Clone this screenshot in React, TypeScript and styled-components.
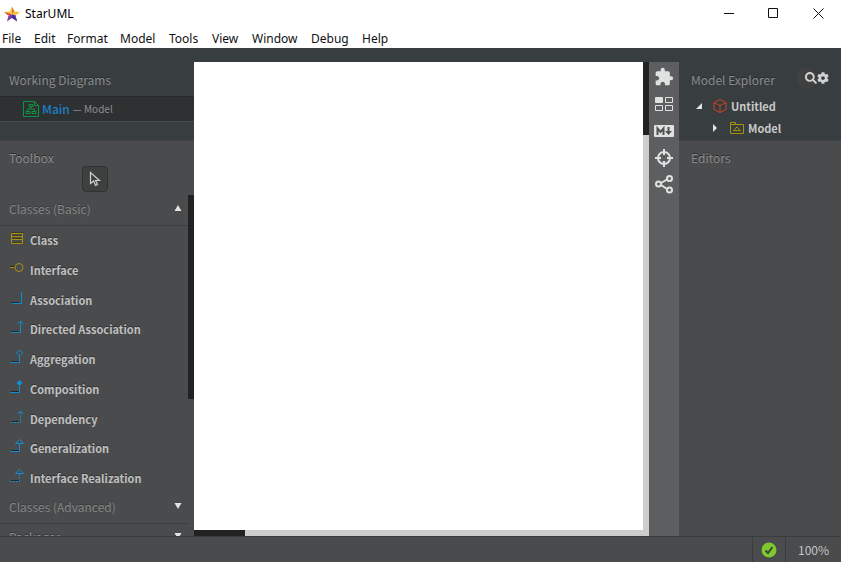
import React from "react";
import styled, { createGlobalStyle } from "styled-components";
import { FaCog, FaSearch } from "react-icons/fa";
import { MdExtension } from "react-icons/md";

const GlobalStyle = createGlobalStyle`
  * { box-sizing: border-box; }
  body { margin: 0; background: #4a4b4c; overflow: hidden; }
  button { border: 0; padding: 0; margin: 0; background: none; color: inherit; font: inherit; }
  h2, ul, p { margin: 0; padding: 0; list-style: none; }
  svg { display: block; flex: none; }
`;

const Window = styled.div`
  display: grid;
  grid-template-rows: 27px 21px minmax(0, 1fr) 26px;
  height: 100vh;
  font: 12px/20px "Noto Sans CJK SC", sans-serif;
  color: #c5c5c5;
`;

const TitleBar = styled.header`
  display: flex;
  align-items: center;
  background: #fff;
  color: #000;
  font: 12px/20px "Noto Sans", sans-serif;
  padding-left: 4px;
  gap: 5px;
`;

const WindowButtons = styled.div`
  display: flex;
  margin-left: auto;
`;

const WindowButton = styled.button`
  display: grid;
  place-items: center;
  width: 45px;
  height: 27px;
`;

const MenuBar = styled.nav`
  display: flex;
  align-items: flex-start;
  gap: 12px;
  padding: 3px 2px 0;
  background: #fff;
  color: #111;
  font: 12px/18px "Noto Sans", sans-serif;
`;

const MenuButton = styled.button<{ $width: number }>`
  width: ${(p) => p.$width}px;
  text-align: left;
  white-space: nowrap;
`;

const Body = styled.div`
  display: grid;
  grid-template-columns: 194px minmax(0, 1fr) 30px 162px;
  min-height: 0;
`;

const SidePanel = styled.aside`
  display: flex;
  flex-direction: column;
  min-height: 0;
  overflow: hidden;
  background: #4a4b4c;
`;

const TopSection = styled.section`
  flex: none;
  height: 93px;
  padding-top: 22px;
  background: #383d3f;
  border-bottom: 1px solid #414547;
`;

const SectionTitle = styled.h2<{ $inset?: number }>`
  padding-left: ${(p) => p.$inset ?? 9}px;
  font-size: 12px;
  font-weight: 400;
  line-height: 20px;
  color: #8b8d8d;
  text-shadow: 0 -1px 0 #292c2d;
`;

const DiagramItem = styled.button`
  display: flex;
  align-items: center;
  gap: 3px;
  width: 100%;
  height: 26px;
  margin-top: 6px;
  padding-left: 23px;
  background: #2d3132;
  border-top: 1px solid #25292a;
  border-bottom: 1px solid #444949;
  color: #8b8d8d;
  font-size: 10px;
`;

const DiagramName = styled.span`
  color: #1d7fc4;
  font-size: 12px;
  font-weight: 500;
`;

const Toolbox = styled.section`
  display: flex;
  flex-direction: column;
  flex: 1;
  min-height: 0;
  padding-top: 7px;
`;

const PointerButton = styled.button`
  display: grid;
  place-items: center;
  flex: none;
  align-self: center;
  width: 26px;
  height: 26px;
  margin: -2px 4px 3px 0;
  background: #3e4040;
  border: 1px solid #303232;
  border-radius: 4px;
`;

const ToolScroller = styled.div`
  display: grid;
  grid-template-columns: minmax(0, 1fr) 6px;
  flex: 1;
  min-height: 0;
  overflow: hidden;
`;

const ToolGroups = styled.div`
  min-height: 0;
  padding-top: 1px;
  overflow: hidden;
`;

const GroupHeader = styled.button`
  display: flex;
  align-items: center;
  justify-content: space-between;
  width: 100%;
  height: 30px;
  padding: 0 6px 4px 9px;
  border-bottom: 1px solid #3c3e3f;
  color: #858787;
  text-shadow: 0 -1px 0 #36393a;
`;

const ToolList = styled.ul``;

const ToolItem = styled.li`
  height: 30px;

  &:nth-child(4n + 3) {
    height: 29px;
  }
`;

const ToolButton = styled.button`
  display: flex;
  gap: 5px;
  width: 100%;
  padding: 4px 0 4px 9px;
  color: #c0c0c0;
  font-size: 11px;
  font-weight: 700;
  line-height: 20px;
  text-shadow: 0 -1px 0 #303233;
`;

const Thumb = styled.div<{ $length: number; $across?: boolean }>`
  width: ${(p) => (p.$across ? `${p.$length}px` : "6px")};
  height: ${(p) => (p.$across ? "6px" : `${p.$length}px`)};
  background: #222;
`;

const Editor = styled.main`
  display: grid;
  grid-template-columns: minmax(0, 1fr) 6px;
  grid-template-rows: minmax(0, 1fr) 6px;
  border-top: 14px solid #383d3f;
  background: #cdcdcd;
`;

const Canvas = styled.div`
  background: #fff;
`;

const ToolStrip = styled.nav`
  display: flex;
  flex-direction: column;
  align-items: center;
  gap: 7px;
  padding-top: 5px;
  border-top: 14px solid #383d3f;
  background: #5d5e60;
  color: #e0e2e2;
`;

const StripButton = styled.button`
  display: grid;
  place-items: center;
  width: 30px;
  height: 20px;
`;

const ExplorerHeader = styled.div`
  display: flex;
  align-items: center;
  height: 20px;
  padding-right: 12px;
`;

const ExplorerActions = styled.div`
  display: flex;
  align-items: center;
  margin-left: auto;
  color: #d0d1d1;
`;

const RoundButton = styled.button<{ $filled?: boolean }>`
  display: flex;
  align-items: center;
  justify-content: flex-end;
  width: ${(p) => (p.$filled ? 21 : 12)}px;
  height: 21px;
  margin-top: -4px;
  border-radius: 50%;
  background: ${(p) => (p.$filled ? "#404040" : "transparent")};
`;

const TreeRow = styled.button<{ $depth: number }>`
  display: flex;
  align-items: center;
  width: 100%;
  height: 22px;
  padding-left: ${(p) => 16 + p.$depth * 16}px;
  gap: ${(p) => (p.$depth ? 11 : 10)}px;
  color: #c8c8c8;
  font-size: 11px;
  font-weight: 700;
`;

const TreeLabel = styled.span`
  display: flex;
  align-items: center;
  gap: 4px;
`;

const Tree = styled.div`
  padding-top: 5px;
`;

const EditorsSection = styled.section`
  padding-top: 7px;
`;

const StatusBar = styled.footer`
  display: flex;
  justify-content: flex-end;
  background: #4a4b4c;
  border-top: 1px solid #3a3c3d;
  font-size: 12px;
`;

const StatusButton = styled.button<{ $width: number }>`
  display: flex;
  align-items: center;
  justify-content: center;
  width: ${(p) => p.$width}px;
  padding-top: 1px;
  border-left: 1px solid #3a3c3d;
`;

const BLUE = "#128bd0";
const GOLD = "#a8900c";

const toolArt: Record<string, React.ReactNode> = {
  Class: (
    <g stroke={GOLD} fill="none">
      <path d="M2.5 3.5h11v10h-11zM2 6.5h12M2 9.5h12" />
      <path d="M2 2.5h12M3 5.5h10M3 8.5h10M3 12.5h10" stroke="#343012" opacity=".6" />
    </g>
  ),
  Interface: (
    <g stroke={GOLD} fill="none">
      <path d="M1 6.5h5" stroke="#252829" />
      <path d="M1 7.5h5" />
      <circle cx="10" cy="7.5" r="4" />
    </g>
  ),
  Association: <path d="M3 13.5h9.5V2" />,
  "Directed Association": <path d="M2 13.5h9.5V2M8.5 5l3-3 3 3" />,
  Aggregation: <path d="M1 13.5h9.5V7M10.5 1l3 3-3 3-3-3z" />,
  Composition: (
    <>
      <path d="M1 13.5h9.5V7" />
      <path d="M10.5 1.5L13 4l-2.5 2.5L8 4z" fill={BLUE} />
    </>
  ),
  Dependency: (
    <>
      <path d="M2 13.5h9.5V2" strokeDasharray="2 1" />
      <path d="M8.5 5l3-3 3 3" />
    </>
  ),
  Generalization: <path d="M1 13.5h9.5V6M6.5 5.5l4-4 4 4z" />,
  "Interface Realization": (
    <>
      <path d="M1 13.5h9.5V6" strokeDasharray="2 1" />
      <path d="M6.5 5.5l4-4 4 4z" />
    </>
  ),
};

const isConnector = (name: string) => name !== "Class" && name !== "Interface";

function ToolIcon({ name }: { name: string }) {
  return (
    <svg width="16" height="20" viewBox="0 0 16 20" fill="none" stroke={BLUE} aria-hidden="true">
      {isConnector(name) && <path d="M2 12.5h8" stroke="#252829" />}
      {toolArt[name]}
    </svg>
  );
}

function Arrow({ up }: { up?: boolean }) {
  return (
    <svg width="8" height="12" viewBox="0 0 8 12" aria-hidden="true">
      <path d={up ? "M4 2l3.5 6h-7z" : "M.5 2h7L4 8z"} fill="#e2e2e2" />
    </svg>
  );
}

function StarLogo() {
  return (
    <svg width="16" height="16" viewBox="0 0 16 16" aria-hidden="true">
      <path d="M8 .5L5.5 5.5 8 8.500z" fill="#f9d338" />
      <path d="M8 .5L10.5 5.5 8 8.500z" fill="#e8742c" />
      <path d="M10.5 5.500l5.500.5-4.500 3.500L8 8.500z" fill="#f7c12f" />
      <path d="M11.5 9.500L13 15.500 8 12V8.500z" fill="#33288c" />
      <path d="M8 12L3 15.500l1.500-6L8 8.500z" fill="#7a3fa8" />
      <path d="M4.500 9.500L0 6l5.500-.5L8 8.500z" fill="#f6ba38" />
      <path d="M4.500 9.500L0 6l8 2.500z" fill="#e23d50" />
      <path d="M8 8.500l3.500 1L13 15.500z" fill="#5b3fa8" />
    </svg>
  );
}

const menus: [string, number][] = [
  ["File", 20], ["Edit", 21], ["Format", 41], ["Model", 37], ["Tools", 31],
  ["View", 28], ["Window", 47], ["Debug", 39], ["Help", 27],
];

const stripTools: { label: string; icon: React.ReactNode }[] = [
  { label: "Extensions", icon: <MdExtension size={20} /> },
  {
    label: "Thumbnails",
    icon: (
      <svg width="18" height="14" viewBox="0 0 18 14" fill="none" stroke="currentColor">
        <path d="M.5.5h7v5h-7z" fill="currentColor" />
        <path d="M10.5.5h7v5h-7zM.5 8.5h7v5h-7zM10.5 8.5h7v5h-7z" />
      </svg>
    ),
  },
  {
    label: "Markdown documentation",
    icon: (
      <svg width="20" height="12" viewBox="0 0 20 12">
        <rect width="20" height="12" rx="1" fill="currentColor" />
        <path d="M3.5 10V3.5L6.500 7l3-3.500V10" fill="none" stroke="#4f5152" strokeWidth="2" />
        <path d="M13.500 2h2v4h2.500l-3.500 4-3.500-4h2.500z" fill="#4f5152" />
      </svg>
    ),
  },
  {
    label: "Select in explorer",
    icon: (
      <svg width="18" height="18" viewBox="0 0 18 18" fill="none" stroke="currentColor" strokeWidth="2">
        <circle cx="9" cy="9" r="6" />
        <path d="M9 0v6M9 12v6M0 9h6M12 9h6" />
      </svg>
    ),
  },
  {
    label: "Relationships",
    icon: (
      <svg width="18" height="20" viewBox="0 0 18 20" fill="none" stroke="currentColor" strokeWidth="2">
        <circle cx="3.5" cy="9" r="2.5" />
        <circle cx="14.5" cy="3.5" r="2.5" />
        <circle cx="14.5" cy="15" r="2.5" />
        <path d="M6 8l6-3.5M6 10l6 4" />
      </svg>
    ),
  },
];

export default function App() {
  return (
    <>
      <GlobalStyle />
      <Window>
        <TitleBar>
          <StarLogo />
          <span>StarUML</span>
          <WindowButtons>
            <WindowButton aria-label="Minimize">
              <svg width="10" height="10" stroke="#111"><path d="M0 4.5h10" /></svg>
            </WindowButton>
            <WindowButton aria-label="Maximize">
              <svg width="11" height="11" stroke="#111" fill="none"><path d="M.5.5h9v9h-9z" /></svg>
            </WindowButton>
            <WindowButton aria-label="Close">
              <svg width="11" height="11" stroke="#111"><path d="M.5.5l10 10M10.5.5l-10 10" /></svg>
            </WindowButton>
          </WindowButtons>
        </TitleBar>

        <MenuBar aria-label="Main menu">
          {menus.map(([name, width]) => (
            <MenuButton key={name} $width={width}>{name}</MenuButton>
          ))}
        </MenuBar>

        <Body>
          <SidePanel>
            <TopSection>
              <SectionTitle>Working Diagrams</SectionTitle>
              <DiagramItem>
                <svg width="16" height="16" viewBox="0 0 16 16" fill="none" stroke="#0c9440">
                  <path d="M.5.5h11l4 4v11H.5zM11.5.5v4h4" />
                  <path d="M6 3.5h4v2H6zM8 5.5V8M4.5 10V8h7v2M3 10.5h4v2H3zM9 10.5h4v2H9z" />
                </svg>
                <DiagramName>Main</DiagramName>
                <span>— Model</span>
              </DiagramItem>
            </TopSection>
            <Toolbox>
              <SectionTitle>Toolbox</SectionTitle>
              <PointerButton aria-label="Select">
                <svg width="12" height="16" viewBox="0 0 12 16" fill="none" stroke="#d0d2d2">
                  <path d="M1.5 1.5v11L4.5 10l2 4.5 2-1-2-4H10.5z" strokeWidth="1.2" />
                </svg>
              </PointerButton>
              <ToolScroller>
                <ToolGroups>
                  <GroupHeader aria-expanded="true">Classes (Basic)<Arrow up /></GroupHeader>
                  <ToolList>
                    {Object.keys(toolArt).map((name) => (
                      <ToolItem key={name}>
                        <ToolButton><ToolIcon name={name} />{name}</ToolButton>
                      </ToolItem>
                    ))}
                  </ToolList>
                  <GroupHeader aria-expanded="false">Classes (Advanced)<Arrow /></GroupHeader>
                  <GroupHeader aria-expanded="false">Packages<Arrow /></GroupHeader>
                </ToolGroups>
                <Thumb $length={204} />
              </ToolScroller>
            </Toolbox>
          </SidePanel>

          <Editor>
            <Canvas />
            <Thumb $length={73} />
            <Thumb $length={51} $across />
          </Editor>

          <ToolStrip aria-label="Panels">
            {stripTools.map(({ label, icon }) => (
              <StripButton key={label} aria-label={label}>{icon}</StripButton>
            ))}
          </ToolStrip>

          <SidePanel>
            <TopSection>
              <ExplorerHeader>
                <SectionTitle $inset={12}>Model Explorer</SectionTitle>
                <ExplorerActions>
                  <RoundButton $filled aria-label="Search"><FaSearch size={12} /></RoundButton>
                  <RoundButton aria-label="Settings"><FaCog size={12} /></RoundButton>
                </ExplorerActions>
              </ExplorerHeader>
              <Tree>
                <TreeRow $depth={0} aria-expanded="true">
                  <svg width="8" height="8"><path d="M7 1v6H1z" fill="#e2e2e2" /></svg>
                  <TreeLabel>
                    <svg width="14" height="14" viewBox="0 0 14 14" fill="none" stroke="#c94327">
                      <path d="M7 .5l6 3v7l-6 3-6-3v-7zM1 3.5l6 3 6-3M7 6.5v7" />
                    </svg>
                    Untitled
                  </TreeLabel>
                </TreeRow>
                <TreeRow $depth={1} aria-expanded="false">
                  <svg width="8" height="8"><path d="M2 0l4 4-4 4z" fill="#e2e2e2" /></svg>
                  <TreeLabel>
                    <svg width="14" height="12" viewBox="0 0 14 12" fill="none" stroke={GOLD}>
                      <path d="M.5 3.5v-3h5v2h8v9H.5zM.5 2.5h6M3.5 8.5L7 5l3.5 3.5z" />
                    </svg>
                    Model
                  </TreeLabel>
                </TreeRow>
              </Tree>
            </TopSection>
            <EditorsSection>
              <SectionTitle $inset={12}>Editors</SectionTitle>
            </EditorsSection>
          </SidePanel>
        </Body>

        <StatusBar>
          <StatusButton $width={33} aria-label="Validation passed">
            <svg width="16" height="16" viewBox="0 0 16 16">
              <circle cx="8" cy="8" r="7.5" fill="#7fc92e" />
              <path d="M4.5 8.5l2.5 2.5 4.5-6" fill="none" stroke="#3c4340" strokeWidth="2" />
            </svg>
          </StatusButton>
          <StatusButton $width={56}>100%</StatusButton>
        </StatusBar>
      </Window>
    </>
  );
}
